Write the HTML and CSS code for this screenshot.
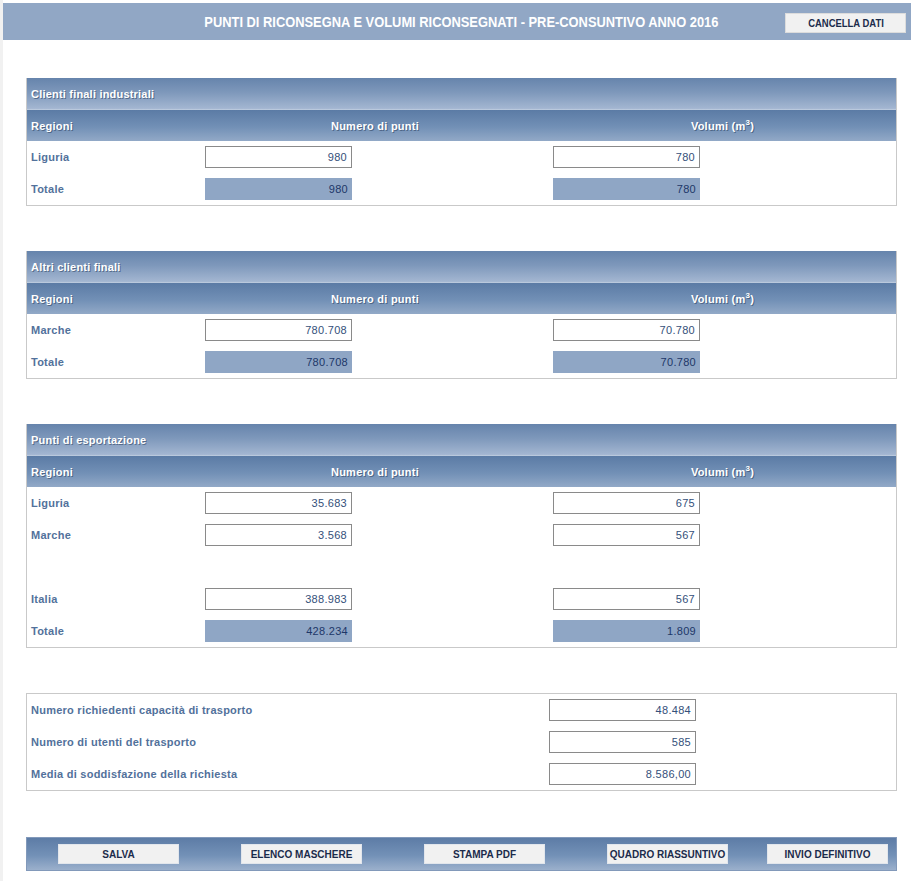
FILE: index.html
```html
<!DOCTYPE html>
<html lang="it">
<head>
<meta charset="utf-8">
<title>Punti di riconsegna</title>
<link rel="stylesheet" href="styles.css">
</head>
<body>
<div class="page">
  <header class="topbar">
    <h1 class="title">PUNTI DI RICONSEGNA E VOLUMI RICONSEGNATI - PRE-CONSUNTIVO ANNO 2016</h1>
    <div class="top-actions"><button class="btn btn-cancel" type="button"><span class="narrow">CANCELLA DATI</span></button></div>
  </header>

  <main class="content">
    <section class="panel">
      <div class="panel-title">Clienti finali industriali</div>
      <div class="row head">
        <div class="th th-left">Regioni</div>
        <div class="th">Numero di punti</div>
        <div class="th">Volumi (m<sup>3</sup>)</div>
      </div>
      <div class="row">
        <div class="label">Liguria</div>
        <div class="cell"><input class="num" type="text" value="980" readonly></div>
        <div class="cell"><input class="num" type="text" value="780" readonly></div>
      </div>
      <div class="row">
        <div class="label">Totale</div>
        <div class="cell"><div class="total">980</div></div>
        <div class="cell"><div class="total">780</div></div>
      </div>
    </section>

    <section class="panel">
      <div class="panel-title">Altri clienti finali</div>
      <div class="row head">
        <div class="th th-left">Regioni</div>
        <div class="th">Numero di punti</div>
        <div class="th">Volumi (m<sup>3</sup>)</div>
      </div>
      <div class="row">
        <div class="label">Marche</div>
        <div class="cell"><input class="num" type="text" value="780.708" readonly></div>
        <div class="cell"><input class="num" type="text" value="70.780" readonly></div>
      </div>
      <div class="row">
        <div class="label">Totale</div>
        <div class="cell"><div class="total">780.708</div></div>
        <div class="cell"><div class="total">70.780</div></div>
      </div>
    </section>

    <section class="panel">
      <div class="panel-title">Punti di esportazione</div>
      <div class="row head">
        <div class="th th-left">Regioni</div>
        <div class="th">Numero di punti</div>
        <div class="th">Volumi (m<sup>3</sup>)</div>
      </div>
      <div class="row">
        <div class="label">Liguria</div>
        <div class="cell"><input class="num" type="text" value="35.683" readonly></div>
        <div class="cell"><input class="num" type="text" value="675" readonly></div>
      </div>
      <div class="row">
        <div class="label">Marche</div>
        <div class="cell"><input class="num" type="text" value="3.568" readonly></div>
        <div class="cell"><input class="num" type="text" value="567" readonly></div>
      </div>
      <div class="row"></div>
      <div class="row">
        <div class="label">Italia</div>
        <div class="cell"><input class="num" type="text" value="388.983" readonly></div>
        <div class="cell"><input class="num" type="text" value="567" readonly></div>
      </div>
      <div class="row">
        <div class="label">Totale</div>
        <div class="cell"><div class="total">428.234</div></div>
        <div class="cell"><div class="total">1.809</div></div>
      </div>
    </section>

    <section class="panel plain">
      <div class="row wide">
        <div class="label">Numero richiedenti capacità di trasporto</div>
        <div class="cell"><input class="num" type="text" value="48.484" readonly></div>
      </div>
      <div class="row wide">
        <div class="label">Numero di utenti del trasporto</div>
        <div class="cell"><input class="num" type="text" value="585" readonly></div>
      </div>
      <div class="row wide">
        <div class="label">Media di soddisfazione della richiesta</div>
        <div class="cell"><input class="num" type="text" value="8.586,00" readonly></div>
      </div>
    </section>

    <nav class="toolbar">
      <button class="btn btn-tool" type="button">SALVA</button>
      <button class="btn btn-tool" type="button">ELENCO MASCHERE</button>
      <button class="btn btn-tool" type="button">STAMPA PDF</button>
      <button class="btn btn-tool" type="button">QUADRO RIASSUNTIVO</button>
      <button class="btn btn-tool last" type="button">INVIO DEFINITIVO</button>
    </nav>
  </main>
</div>
</body>
</html>
```

FILE: styles.css
```css
html, body {
  margin: 0;
  padding: 0;
}

body {
  background: #f1f1f1;
  font-family: "Liberation Sans", Arial, sans-serif;
}

.page {
  margin-left: 3px;
  background: #ffffff;
  min-height: 881px;
  padding-top: 3px;
  box-sizing: border-box;
}

/* ---------- top bar ---------- */
.topbar {
  display: grid;
  grid-template-columns: 1fr auto 1fr;
  align-items: center;
  height: 37px;
  background: #91a7c5;
}

.title {
  grid-column: 2;
  margin: 0 0 0 9px;
  font-family: "Liberation Sans", Arial, sans-serif;
  font-weight: bold;
  font-size: 14px;
  color: #ffffff;
  white-space: nowrap;
  transform: scaleX(0.92);
}

.top-actions {
  grid-column: 3;
  justify-self: end;
  padding: 3px 5px 0 0;
}

.btn {
  display: flex;
  align-items: center;
  justify-content: center;
  flex-shrink: 0;
  width: 121px;
  height: 20px;
  margin: 0;
  padding: 0;
  background: #f1f1f1;
  border: 1px solid #dcdcdc;
  color: #1b2b4b;
  font-family: "Liberation Sans", Arial, sans-serif;
  font-weight: bold;
  white-space: nowrap;
  cursor: pointer;
}

.btn-cancel {
  font-size: 11px;
}

.narrow {
  display: inline-block;
  transform: scaleX(0.86);
}

/* ---------- content ---------- */
.content {
  padding: 38px 0 0 23px;
}

.panel {
  width: 871px;
  box-sizing: border-box;
  border: 1px solid #c9c9c9;
  border-top: 0;
  margin-bottom: 45px;
}

.panel.plain {
  border-top: 1px solid #c9c9c9;
  margin-bottom: 46px;
}

.panel-title {
  height: 32px;
  line-height: 32px;
  padding-left: 4px;
  background: linear-gradient(#6684ac 0%, #7e98bb 45%, #a3b6d1 95%, #c4d1e2 100%);
  color: #ffffff;
  font-size: 11px;
  font-weight: bold;
  letter-spacing: 0.2px;
  text-shadow: 1px 1px 0 rgba(40, 60, 90, 0.55);
}

.row {
  display: grid;
  grid-template-columns: 174px 348px 1fr;
  align-items: center;
  height: 32px;
}

.row.head {
  height: 31px;
  background: linear-gradient(#5b7ba5 0%, #7290b6 55%, #92a9c7 100%);
}

.row.wide {
  grid-template-columns: 518px 1fr;
}

.th {
  text-align: center;
  color: #ffffff;
  font-size: 11px;
  font-weight: bold;
  letter-spacing: 0.25px;
  text-shadow: 1px 1px 0 rgba(40, 60, 90, 0.55);
}

.th-left {
  text-align: left;
  padding-left: 4px;
}

.th sup {
  font-size: 8px;
  line-height: 0;
}

.label {
  padding-left: 4px;
  color: #52719b;
  font-size: 11px;
  font-weight: bold;
  letter-spacing: 0.25px;
}

.cell {
  padding-left: 4px;
  display: flex;
  align-items: center;
}

.num,
.total {
  width: 147px;
  height: 22px;
  box-sizing: border-box;
  margin: 0;
  padding: 0 4px 0 0;
  text-align: right;
  font-family: "Liberation Sans", Arial, sans-serif;
  font-size: 11px;
  letter-spacing: 0.3px;
}

.num {
  border: 1px solid #8a8a8a;
  background: #ffffff;
  color: #34507a;
  outline: none;
}

.total {
  display: flex;
  align-items: center;
  justify-content: flex-end;
  background: #8fa6c5;
  color: #1d3768;
}

/* ---------- toolbar ---------- */
.toolbar {
  display: flex;
  align-items: center;
  width: 871px;
  height: 34px;
  box-sizing: border-box;
  padding: 0 8px 0 31px;
  background: linear-gradient(#5d7ca6 0%, #7391b7 55%, #9bb0cc 100%);
  border: 1px solid #8299ba;
}

.btn-tool {
  font-size: 10px;
  border-color: #e2e6ec;
}

.btn-tool + .btn-tool {
  margin-left: 62px;
}

.btn-tool.last {
  margin-left: auto;
}
```
